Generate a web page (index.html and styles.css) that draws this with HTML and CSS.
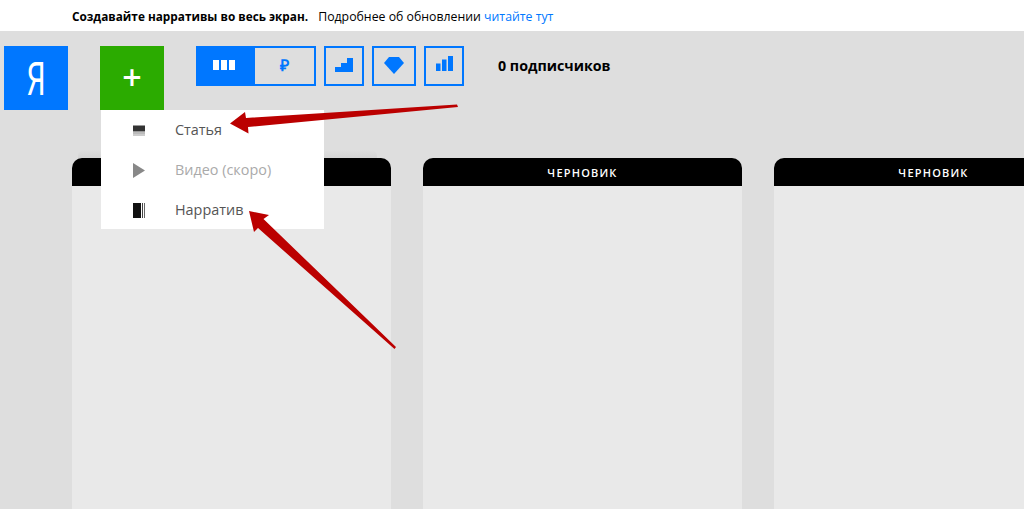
FILE: index.html
```html
<!DOCTYPE html>
<html>
<head>
    <meta charset="utf-8">
    <link rel="stylesheet" href="styles.css">
</head>
<body>
    <div class="notice">
        <strong>Создавайте нарративы во весь экран.</strong>
        <span class="notice-text">Подробнее об обновлении <a href="#">читайте тут</a></span>
    </div>

    <div class="page">
        <div class="toolbar">
            <div class="logo"><span class="logo-letter">Я</span></div>
            <div class="add">
                <div class="add-button">+</div>
                <div class="menu">
                    <div class="menu-item">
                        <svg class="menu-icon" viewBox="0 0 12 15"><path d="M0 2.500h12v6H0z" fill="#333"/><path d="M0 9.500h12v1H0z" fill="#777"/><path d="M0 11.500h12v1H0z" fill="#999"/></svg>
                        <span class="menu-label">Статья</span>
                    </div>
                    <div class="menu-item disabled">
                        <svg class="menu-icon" viewBox="0 0 12 15"><path d="M0 0l12 7.500L0 15z" fill="#888"/></svg>
                        <span class="menu-label">Видео (скоро)</span>
                    </div>
                    <div class="menu-item">
                        <svg class="menu-icon" viewBox="0 0 12 15"><path d="M0 0h8v15H0z" fill="#111"/><path d="M9 0h1v15H9z" fill="#444"/><path d="M11 0h1v15h-1z" fill="#666"/></svg>
                        <span class="menu-label">Нарратив</span>
                    </div>
                </div>
            </div>
            <div class="tabs">
                <div class="tab-group">
                    <div class="tab active">
                        <svg width="22" height="10" viewBox="0 0 22 10"><path d="M0 0h6v10H0zM8 0h6v10H8zM16 0h6v10h-6z" fill="#fff"/></svg>
                    </div>
                    <div class="tab rub">₽</div>
                </div>
                <div class="tab">
                    <svg width="18" height="14" viewBox="0 0 18 14"><path d="M0 14V9h6V5h6V0h6v14z" fill="#0077ff"/></svg>
                </div>
                <div class="tab tab-wide">
                    <svg width="20" height="17" viewBox="0 0 20 17"><path d="M5 0h10l5 6-10 11L0 6z" fill="#0077ff"/></svg>
                </div>
                <div class="tab">
                    <svg class="bars-icon" width="17" height="15" viewBox="0 0 17 15"><path d="M0 7.500h4.500V15H0zM6 3.500h4.500V15H6zM12 0h5v15h-5z" fill="#0077ff"/></svg>
                </div>
            </div>
            <div class="subscribers">0 подписчиков</div>
        </div>

        <div class="cards">
            <div class="card stacked"><div class="card-head"></div></div>
            <div class="card"><div class="card-head">Черновик</div></div>
            <div class="card card-cut"><div class="card-head">Черновик</div></div>
        </div>
    </div>

    <svg class="arrows" width="1024" height="509" viewBox="0 0 1024 509">
        <path d="M457 104.500L458 107 248 127 248.500 133.500 230 123.500 245 112 246 118z" fill="#bb0000"/>
        <path d="M396 347L394.500 349 258 228 254 232 249 211 269 215 263.500 219z" fill="#bb0000"/>
    </svg>
</body>
</html>
```

FILE: styles.css
```css
* {
    box-sizing: border-box;
}

html, body {
    height: 100%;
}

body {
    margin: 0;
    overflow: hidden;
    position: relative;
    background-color: #dedede;
    font-family: "Open Sans", Arial, sans-serif;
}

.notice {
    height: 31px;
    padding: 8px 0 0 72px;
    background-color: #fff;
    font-size: 11.8px;
    line-height: 16px;
    color: #000;
    white-space: nowrap;
}

.notice strong {
    margin-right: 7px;
}

.notice-text {
    font-size: 12.3px;
}

.notice a {
    color: #0077ff;
    text-decoration: none;
}

.page {
    display: flex;
    flex-direction: column;
    height: 478px;
    padding: 15px 0 0 4px;
}

.toolbar {
    display: flex;
    flex: none;
    align-items: flex-start;
    height: 112px;
}

.logo {
    width: 64px;
    height: 64px;
    margin-right: 32px;
    background-color: #0077ff;
    color: #fff;
    font-family: Roboto, Arial, sans-serif;
    font-size: 47px;
    font-weight: 400;
    line-height: 66px;
    text-align: center;
}

.logo-letter {
    display: inline-block;
    transform: scaleX(0.64);
}

.add {
    position: relative;
    width: 64px;
    margin-right: 32px;
}

.add-button {
    width: 64px;
    height: 64px;
    background-color: #2bab00;
    color: #fff;
    font-size: 34px;
    font-weight: 600;
    line-height: 62px;
    text-align: center;
}

.menu {
    position: absolute;
    top: 64px;
    left: 1px;
    z-index: 2;
    width: 223px;
    height: 119px;
    background-color: #fff;
}

.menu-item {
    display: flex;
    align-items: center;
    height: 40px;
    padding-left: 32px;
    font-size: 14.4px;
    color: #555;
}

.menu-item.disabled {
    color: #aaa;
}

.menu-icon {
    width: 12px;
    height: 15px;
    margin-right: 30px;
}

.menu-label {
    margin-bottom: 2px;
}

.tabs {
    display: flex;
    gap: 8px;
}

.tab-group {
    display: flex;
}

.tab {
    display: flex;
    align-items: center;
    justify-content: center;
    width: 40px;
    height: 40px;
    border: 2px solid #0077ff;
    color: #0077ff;
}

.tab svg {
    margin-bottom: 2px;
}

.tab .bars-icon {
    margin-bottom: 5px;
}

.tab.active {
    width: 59px;
    padding-right: 3px;
    background-color: #0077ff;
}

.tab.rub {
    width: 61px;
    padding-bottom: 3px;
    border-left: 0;
    font-size: 16px;
    font-weight: 700;
}

.tab-wide {
    width: 44px;
}

.subscribers {
    margin: 11px 0 0 34px;
    font-size: 14.25px;
    font-weight: 700;
    line-height: 18px;
    color: #000;
}

.cards {
    display: flex;
    flex: 1;
    gap: 32px;
    padding-left: 68px;
}

.card {
    position: relative;
    flex: none;
    width: 319px;
    background-color: #e9e9e9;
    border-radius: 10px 10px 0 0;
}

.card-cut {
    width: 250px;
    border-radius: 10px 0 0 0;
}

.card-cut .card-head {
    padding-left: 69px;
    border-radius: 10px 0 0 0;
}

.stacked::before {
    content: "";
    position: absolute;
    top: -8px;
    left: 6px;
    right: 14px;
    height: 8px;
    background: linear-gradient(#dedede, #d4d4d4);
    border-radius: 6px 6px 0 0;
}

.card-head {
    height: 28px;
    background-color: #000;
    border-radius: 10px 10px 0 0;
    color: #fff;
    font-size: 11px;
    font-weight: 600;
    letter-spacing: 1.2px;
    line-height: 29px;
    text-align: center;
    text-transform: uppercase;
}

.arrows {
    position: absolute;
    top: 0;
    left: 0;
    z-index: 3;
    pointer-events: none;
}
```
